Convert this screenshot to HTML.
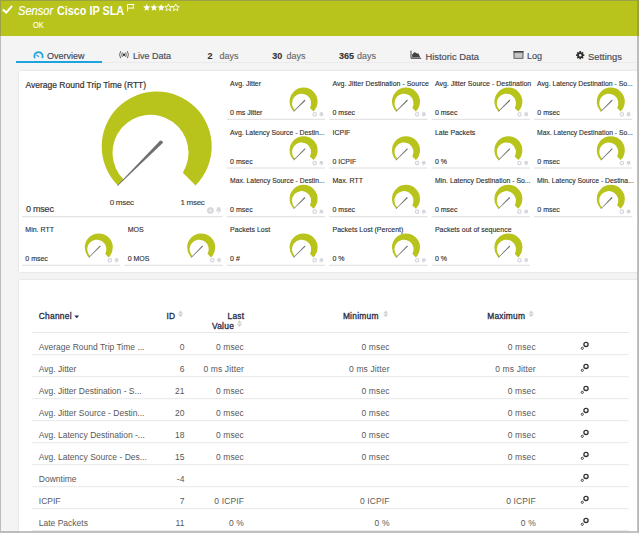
<!DOCTYPE html>
<html><head><meta charset="utf-8"><style>
*{margin:0;padding:0;box-sizing:border-box}
html,body{width:639px;height:533px;overflow:hidden;background:#f4f4f4;font-family:"Liberation Sans",sans-serif}
.abs{position:absolute}
#hdr{position:absolute;left:0;top:0;width:639px;height:35.5px;background:#b8c31c}
.w{position:absolute;color:#fff;white-space:nowrap}
.tab{position:absolute;top:51.2px;font-size:9px;color:#474a57;white-space:nowrap;line-height:11px;-webkit-text-stroke:0.15px #474a57}
.tab b{color:#333;-webkit-text-stroke:0.1px #333}
.panel{position:absolute;background:#fff;box-shadow:0 0 2px rgba(0,0,0,0.12)}
.ct{position:absolute;font-size:7px;line-height:8px;color:#2e2e2e;white-space:nowrap;-webkit-text-stroke:0.12px #2e2e2e}
.cv{position:absolute;font-size:7px;line-height:8px;color:#2e2e2e;white-space:nowrap;-webkit-text-stroke:0.12px #2e2e2e}
.tr{position:absolute;left:0;width:639px;height:22px;font-size:8.5px;color:#585858;letter-spacing:0.12px}
.tr span{position:absolute;top:9.5px;line-height:10px;white-space:nowrap}
.c1{left:38.8px;letter-spacing:0}
.c2{right:calc(639px - 184.6px)}
.c3{right:calc(639px - 244px)}
.c4{right:calc(639px - 389.6px)}
.c5{right:calc(639px - 535.8px)}
.th{position:absolute;font-size:8.4px;font-weight:normal;color:#262a45;white-space:nowrap;line-height:10px;-webkit-text-stroke:0.3px #262a45;letter-spacing:0.25px}
</style></head><body>
<div id="hdr"></div>
<svg class="abs" style="left:0;top:0" width="20" height="20"><path d="M2.8 9.4L6.3 12.6L12.1 5.9" fill="none" stroke="#fff" stroke-width="2"/></svg>
<div class="w" style="left:17.6px;top:4.8px;font-size:12.3px;font-style:italic;line-height:13px;-webkit-text-stroke:0.2px #fff;transform:scaleX(0.9);transform-origin:0 0">Sensor</div>
<div class="w" style="left:57.2px;top:4.8px;font-size:12.3px;font-weight:bold;line-height:13px;transform:scaleX(0.88);transform-origin:0 0">Cisco IP SLA</div>
<svg class="abs" style="left:126px;top:3px" width="10" height="9"><path d="M1.5 8.5V1.5H8L6.8 3.3L8 5.1H1.5" fill="none" stroke="#fff" stroke-width="1"/></svg>
<svg class="abs" style="left:143px;top:3px" width="40" height="10"><polygon points="3.70,0.95 4.69,3.33 7.27,3.54 5.30,5.22 5.90,7.73 3.70,6.39 1.50,7.73 2.10,5.22 0.13,3.54 2.71,3.33" fill="#fff"/><polygon points="10.95,0.95 11.94,3.33 14.52,3.54 12.55,5.22 13.15,7.73 10.95,6.39 8.75,7.73 9.35,5.22 7.38,3.54 9.96,3.33" fill="#fff"/><polygon points="18.20,0.95 19.19,3.33 21.77,3.54 19.80,5.22 20.40,7.73 18.20,6.39 16.00,7.73 16.60,5.22 14.63,3.54 17.21,3.33" fill="#fff"/><polygon points="25.45,0.95 26.44,3.33 29.02,3.54 27.05,5.22 27.65,7.73 25.45,6.39 23.25,7.73 23.85,5.22 21.88,3.54 24.46,3.33" fill="none" stroke="#fff" stroke-width="0.9"/><polygon points="32.70,0.95 33.69,3.33 36.27,3.54 34.30,5.22 34.90,7.73 32.70,6.39 30.50,7.73 31.10,5.22 29.13,3.54 31.71,3.33" fill="none" stroke="#fff" stroke-width="0.9"/></svg>
<div class="w" style="left:32.8px;top:19.6px;font-size:8.6px;line-height:10px;transform:scaleX(0.86);transform-origin:0 0;-webkit-text-stroke:0.15px #fff">OK</div>

<div class="abs" style="left:16px;top:62px;width:621px;height:1px;background:#eaeaea"></div>
<div class="abs" style="left:16px;top:61px;width:86px;height:2px;background:#1fa3de"></div>
<svg class="abs" style="left:33px;top:50px" width="12" height="10"><path d="M1.9 8.1A4.1 4.1 0 1 1 9.1 8.1" fill="none" stroke="#1fa3de" stroke-width="1.7"/><path d="M3.4 5.0L6.0 6.7" stroke="#1fa3de" stroke-width="1.1"/></svg>
<div class="tab" style="left:47px;color:#3b3f52">Overview</div>
<svg class="abs" style="left:118px;top:50px" width="12" height="10"><g fill="none" stroke="#555" stroke-width="0.9"><path d="M2.6 1.2Q0.6 4.7 2.6 8.2M4.4 2.4Q3.1 4.7 4.4 7M9.4 1.2Q11.4 4.7 9.4 8.2M7.6 2.4Q8.9 4.7 7.6 7"/></g><circle cx="6" cy="4.7" r="1.2" fill="#333"/></svg>
<div class="tab" style="left:133px">Live Data</div>
<div class="tab" style="left:207.5px"><b>2</b></div>
<div class="tab" style="left:219.4px;color:#666;-webkit-text-stroke:0.1px #666">days</div>
<div class="tab" style="left:272.3px"><b>30</b></div>
<div class="tab" style="left:286.6px;color:#666;-webkit-text-stroke:0.1px #666">days</div>
<div class="tab" style="left:339px"><b>365</b></div>
<div class="tab" style="left:357px;color:#666;-webkit-text-stroke:0.1px #666">days</div>
<svg class="abs" style="left:410px;top:50px" width="12" height="10"><path d="M1 0.7V8.3H11.2" fill="none" stroke="#444" stroke-width="1"/><path d="M2.1 7.6V4.6L4.7 1.9L6.4 3.3L8.4 3.4L10.4 7.6Z" fill="#444"/></svg>
<div class="tab" style="left:425.4px;font-size:9.4px">Historic Data</div>
<svg class="abs" style="left:513px;top:50px" width="11" height="10"><rect x="1" y="1.5" width="9" height="6.8" fill="#bbb" stroke="#555" stroke-width="0.9"/><rect x="0.6" y="1" width="9.8" height="1.6" fill="#444"/><path d="M2 4.3H9M2 5.7H9M2 7.1H9" stroke="#ddd" stroke-width="0.5"/></svg>
<div class="tab" style="left:527px">Log</div>
<svg class="abs" style="left:575px;top:50px" width="11" height="11"><g transform="translate(5.2 5.2)"><circle r="3.0" fill="#333"/><path d="M0-4.1V4.1M-4.1 0H4.1M-2.9-2.9L2.9 2.9M-2.9 2.9L2.9-2.9" stroke="#333" stroke-width="1.7"/><circle r="1.2" fill="#f4f4f4"/></g></svg>
<div class="tab" style="left:588px;font-size:9.4px">Settings</div>

<div class="panel" style="left:18.5px;top:70.7px;width:619px;height:201.3px"></div>
<div class="panel" style="left:18.7px;top:279.7px;width:619px;height:260px"></div>

<div class="abs" style="left:25.5px;top:79.6px;font-size:8.5px;line-height:10px;color:#333;white-space:nowrap;-webkit-text-stroke:0.2px #333">Average Round Trip Time (RTT)</div>
<div class="abs" style="left:25.9px;top:203.5px;font-size:9px;line-height:10px;color:#333;white-space:nowrap;letter-spacing:-0.2px;-webkit-text-stroke:0.15px #333">0 msec</div>
<div class="abs" style="left:109.8px;top:198px;font-size:8px;line-height:10px;color:#444;white-space:nowrap;letter-spacing:-0.3px;-webkit-text-stroke:0.15px #444">0 msec</div>
<div class="abs" style="left:180.5px;top:198px;font-size:8px;line-height:10px;color:#444;white-space:nowrap;letter-spacing:-0.3px;-webkit-text-stroke:0.15px #444">1 msec</div>
<div class="ct" style="left:230.10px;top:79.85px">Avg. Jitter</div><div class="cv" style="left:230.10px;top:108.95px">0 ms Jitter</div><div class="ct" style="left:332.50px;top:79.85px">Avg. Jitter Destination - Source</div><div class="cv" style="left:332.50px;top:108.95px">0 msec</div><div class="ct" style="left:434.90px;top:79.85px">Avg. Jitter Source - Destination</div><div class="cv" style="left:434.90px;top:108.95px">0 msec</div><div class="ct" style="left:537.30px;top:79.85px;transform:scaleX(0.978);transform-origin:0 0">Avg. Latency Destination - So...</div><div class="cv" style="left:537.30px;top:108.95px">0 msec</div><div class="ct" style="left:230.10px;top:128.50px;transform:scaleX(0.982);transform-origin:0 0">Avg. Latency Source - Destin...</div><div class="cv" style="left:230.10px;top:157.60px">0 msec</div><div class="ct" style="left:332.50px;top:128.50px">ICPIF</div><div class="cv" style="left:332.50px;top:157.60px">0 ICPIF</div><div class="ct" style="left:434.90px;top:128.50px">Late Packets</div><div class="cv" style="left:434.90px;top:157.60px">0 %</div><div class="ct" style="left:537.30px;top:128.50px;transform:scaleX(0.966);transform-origin:0 0">Max. Latency Destination - So...</div><div class="cv" style="left:537.30px;top:157.60px">0 msec</div><div class="ct" style="left:230.10px;top:177.15px;transform:scaleX(0.969);transform-origin:0 0">Max. Latency Source - Destin...</div><div class="cv" style="left:230.10px;top:206.25px">0 msec</div><div class="ct" style="left:332.50px;top:177.15px">Max. RTT</div><div class="cv" style="left:332.50px;top:206.25px">0 msec</div><div class="ct" style="left:434.90px;top:177.15px;transform:scaleX(0.982);transform-origin:0 0">Min. Latency Destination - So...</div><div class="cv" style="left:434.90px;top:206.25px">0 msec</div><div class="ct" style="left:537.30px;top:177.15px;transform:scaleX(0.972);transform-origin:0 0">Min. Latency Source - Destina...</div><div class="cv" style="left:537.30px;top:206.25px">0 msec</div><div class="ct" style="left:25.30px;top:225.80px">Min. RTT</div><div class="cv" style="left:25.30px;top:254.90px">0 msec</div><div class="ct" style="left:127.70px;top:225.80px">MOS</div><div class="cv" style="left:127.70px;top:254.90px">0 MOS</div><div class="ct" style="left:230.10px;top:225.80px">Packets Lost</div><div class="cv" style="left:230.10px;top:254.90px">0 #</div><div class="ct" style="left:332.50px;top:225.80px">Packets Lost (Percent)</div><div class="cv" style="left:332.50px;top:254.90px">0 %</div><div class="ct" style="left:434.90px;top:225.80px">Packets out of sequence</div><div class="cv" style="left:434.90px;top:254.90px">0 %</div>

<div class="th" style="left:38.8px;top:311px">Channel</div>
<svg class="abs" style="left:74px;top:315px" width="6" height="4"><path d="M0.3 0.5H5.2L2.75 3.3Z" fill="#2a2d45"/></svg>
<div class="th" style="left:166.4px;top:311px">ID</div>
<div class="th" style="left:227.5px;top:311px">Last</div>
<div class="th" style="left:212px;top:320.5px">Value</div>
<div class="th" style="left:342.9px;top:311px">Minimum</div>
<div class="th" style="left:487.2px;top:311px">Maximum</div>
<svg class="abs" style="left:0;top:0" width="639" height="533">
<rect x="226.80" y="118.75" width="98.3" height="1.2" fill="#e3e3e3"/><g transform="translate(303.6 101.55) scale(0.2545)"><path d="M-38.89 38.89A55.0 55.0 0 1 1 38.89 38.89L24.86 24.86A37.5 37.5 0 1 0 -33.91 33.91Z" fill="#b8c31c"/><path d="M-40.01 38.59L2.60 -6.00L6.00 -2.60L-38.59 40.01Z" fill="#707070"/><circle cx="4.3" cy="-4.3" r="2.4" fill="#707070"/></g><g transform="translate(312.4 112.05)"><circle cx="2.3" cy="2.3" r="1.7" fill="none" stroke="#d3d6dc" stroke-width="1.2"/><path d="M7.6 0.3H10.4L11.1 3.6H6.9Z M8.75 3.6H9.25V5.2H8.75Z" fill="#d3d6dc"/></g><rect x="329.20" y="118.75" width="98.3" height="1.2" fill="#e3e3e3"/><g transform="translate(406.0 101.55) scale(0.2545)"><path d="M-38.89 38.89A55.0 55.0 0 1 1 38.89 38.89L24.86 24.86A37.5 37.5 0 1 0 -33.91 33.91Z" fill="#b8c31c"/><path d="M-40.01 38.59L2.60 -6.00L6.00 -2.60L-38.59 40.01Z" fill="#707070"/><circle cx="4.3" cy="-4.3" r="2.4" fill="#707070"/></g><g transform="translate(414.80000000000007 112.05)"><circle cx="2.3" cy="2.3" r="1.7" fill="none" stroke="#d3d6dc" stroke-width="1.2"/><path d="M7.6 0.3H10.4L11.1 3.6H6.9Z M8.75 3.6H9.25V5.2H8.75Z" fill="#d3d6dc"/></g><rect x="431.60" y="118.75" width="98.3" height="1.2" fill="#e3e3e3"/><g transform="translate(508.4 101.55) scale(0.2545)"><path d="M-38.89 38.89A55.0 55.0 0 1 1 38.89 38.89L24.86 24.86A37.5 37.5 0 1 0 -33.91 33.91Z" fill="#b8c31c"/><path d="M-40.01 38.59L2.60 -6.00L6.00 -2.60L-38.59 40.01Z" fill="#707070"/><circle cx="4.3" cy="-4.3" r="2.4" fill="#707070"/></g><g transform="translate(517.2 112.05)"><circle cx="2.3" cy="2.3" r="1.7" fill="none" stroke="#d3d6dc" stroke-width="1.2"/><path d="M7.6 0.3H10.4L11.1 3.6H6.9Z M8.75 3.6H9.25V5.2H8.75Z" fill="#d3d6dc"/></g><rect x="534.00" y="118.75" width="98.3" height="1.2" fill="#e3e3e3"/><g transform="translate(610.8 101.55) scale(0.2545)"><path d="M-38.89 38.89A55.0 55.0 0 1 1 38.89 38.89L24.86 24.86A37.5 37.5 0 1 0 -33.91 33.91Z" fill="#b8c31c"/><path d="M-40.01 38.59L2.60 -6.00L6.00 -2.60L-38.59 40.01Z" fill="#707070"/><circle cx="4.3" cy="-4.3" r="2.4" fill="#707070"/></g><g transform="translate(619.6 112.05)"><circle cx="2.3" cy="2.3" r="1.7" fill="none" stroke="#d3d6dc" stroke-width="1.2"/><path d="M7.6 0.3H10.4L11.1 3.6H6.9Z M8.75 3.6H9.25V5.2H8.75Z" fill="#d3d6dc"/></g><rect x="226.80" y="167.40" width="98.3" height="1.2" fill="#e3e3e3"/><g transform="translate(303.6 150.2) scale(0.2545)"><path d="M-38.89 38.89A55.0 55.0 0 1 1 38.89 38.89L24.86 24.86A37.5 37.5 0 1 0 -33.91 33.91Z" fill="#b8c31c"/><path d="M-40.01 38.59L2.60 -6.00L6.00 -2.60L-38.59 40.01Z" fill="#707070"/><circle cx="4.3" cy="-4.3" r="2.4" fill="#707070"/></g><g transform="translate(312.4 160.70000000000002)"><circle cx="2.3" cy="2.3" r="1.7" fill="none" stroke="#d3d6dc" stroke-width="1.2"/><path d="M7.6 0.3H10.4L11.1 3.6H6.9Z M8.75 3.6H9.25V5.2H8.75Z" fill="#d3d6dc"/></g><rect x="329.20" y="167.40" width="98.3" height="1.2" fill="#e3e3e3"/><g transform="translate(406.0 150.2) scale(0.2545)"><path d="M-38.89 38.89A55.0 55.0 0 1 1 38.89 38.89L24.86 24.86A37.5 37.5 0 1 0 -33.91 33.91Z" fill="#b8c31c"/><path d="M-40.01 38.59L2.60 -6.00L6.00 -2.60L-38.59 40.01Z" fill="#707070"/><circle cx="4.3" cy="-4.3" r="2.4" fill="#707070"/></g><g transform="translate(414.80000000000007 160.70000000000002)"><circle cx="2.3" cy="2.3" r="1.7" fill="none" stroke="#d3d6dc" stroke-width="1.2"/><path d="M7.6 0.3H10.4L11.1 3.6H6.9Z M8.75 3.6H9.25V5.2H8.75Z" fill="#d3d6dc"/></g><rect x="431.60" y="167.40" width="98.3" height="1.2" fill="#e3e3e3"/><g transform="translate(508.4 150.2) scale(0.2545)"><path d="M-38.89 38.89A55.0 55.0 0 1 1 38.89 38.89L24.86 24.86A37.5 37.5 0 1 0 -33.91 33.91Z" fill="#b8c31c"/><path d="M-40.01 38.59L2.60 -6.00L6.00 -2.60L-38.59 40.01Z" fill="#707070"/><circle cx="4.3" cy="-4.3" r="2.4" fill="#707070"/></g><g transform="translate(517.2 160.70000000000002)"><circle cx="2.3" cy="2.3" r="1.7" fill="none" stroke="#d3d6dc" stroke-width="1.2"/><path d="M7.6 0.3H10.4L11.1 3.6H6.9Z M8.75 3.6H9.25V5.2H8.75Z" fill="#d3d6dc"/></g><rect x="534.00" y="167.40" width="98.3" height="1.2" fill="#e3e3e3"/><g transform="translate(610.8 150.2) scale(0.2545)"><path d="M-38.89 38.89A55.0 55.0 0 1 1 38.89 38.89L24.86 24.86A37.5 37.5 0 1 0 -33.91 33.91Z" fill="#b8c31c"/><path d="M-40.01 38.59L2.60 -6.00L6.00 -2.60L-38.59 40.01Z" fill="#707070"/><circle cx="4.3" cy="-4.3" r="2.4" fill="#707070"/></g><g transform="translate(619.6 160.70000000000002)"><circle cx="2.3" cy="2.3" r="1.7" fill="none" stroke="#d3d6dc" stroke-width="1.2"/><path d="M7.6 0.3H10.4L11.1 3.6H6.9Z M8.75 3.6H9.25V5.2H8.75Z" fill="#d3d6dc"/></g><rect x="226.80" y="216.05" width="98.3" height="1.2" fill="#e3e3e3"/><g transform="translate(303.6 198.85) scale(0.2545)"><path d="M-38.89 38.89A55.0 55.0 0 1 1 38.89 38.89L24.86 24.86A37.5 37.5 0 1 0 -33.91 33.91Z" fill="#b8c31c"/><path d="M-40.01 38.59L2.60 -6.00L6.00 -2.60L-38.59 40.01Z" fill="#707070"/><circle cx="4.3" cy="-4.3" r="2.4" fill="#707070"/></g><g transform="translate(312.4 209.35000000000002)"><circle cx="2.3" cy="2.3" r="1.7" fill="none" stroke="#d3d6dc" stroke-width="1.2"/><path d="M7.6 0.3H10.4L11.1 3.6H6.9Z M8.75 3.6H9.25V5.2H8.75Z" fill="#d3d6dc"/></g><rect x="329.20" y="216.05" width="98.3" height="1.2" fill="#e3e3e3"/><g transform="translate(406.0 198.85) scale(0.2545)"><path d="M-38.89 38.89A55.0 55.0 0 1 1 38.89 38.89L24.86 24.86A37.5 37.5 0 1 0 -33.91 33.91Z" fill="#b8c31c"/><path d="M-40.01 38.59L2.60 -6.00L6.00 -2.60L-38.59 40.01Z" fill="#707070"/><circle cx="4.3" cy="-4.3" r="2.4" fill="#707070"/></g><g transform="translate(414.80000000000007 209.35000000000002)"><circle cx="2.3" cy="2.3" r="1.7" fill="none" stroke="#d3d6dc" stroke-width="1.2"/><path d="M7.6 0.3H10.4L11.1 3.6H6.9Z M8.75 3.6H9.25V5.2H8.75Z" fill="#d3d6dc"/></g><rect x="431.60" y="216.05" width="98.3" height="1.2" fill="#e3e3e3"/><g transform="translate(508.4 198.85) scale(0.2545)"><path d="M-38.89 38.89A55.0 55.0 0 1 1 38.89 38.89L24.86 24.86A37.5 37.5 0 1 0 -33.91 33.91Z" fill="#b8c31c"/><path d="M-40.01 38.59L2.60 -6.00L6.00 -2.60L-38.59 40.01Z" fill="#707070"/><circle cx="4.3" cy="-4.3" r="2.4" fill="#707070"/></g><g transform="translate(517.2 209.35000000000002)"><circle cx="2.3" cy="2.3" r="1.7" fill="none" stroke="#d3d6dc" stroke-width="1.2"/><path d="M7.6 0.3H10.4L11.1 3.6H6.9Z M8.75 3.6H9.25V5.2H8.75Z" fill="#d3d6dc"/></g><rect x="534.00" y="216.05" width="98.3" height="1.2" fill="#e3e3e3"/><g transform="translate(610.8 198.85) scale(0.2545)"><path d="M-38.89 38.89A55.0 55.0 0 1 1 38.89 38.89L24.86 24.86A37.5 37.5 0 1 0 -33.91 33.91Z" fill="#b8c31c"/><path d="M-40.01 38.59L2.60 -6.00L6.00 -2.60L-38.59 40.01Z" fill="#707070"/><circle cx="4.3" cy="-4.3" r="2.4" fill="#707070"/></g><g transform="translate(619.6 209.35000000000002)"><circle cx="2.3" cy="2.3" r="1.7" fill="none" stroke="#d3d6dc" stroke-width="1.2"/><path d="M7.6 0.3H10.4L11.1 3.6H6.9Z M8.75 3.6H9.25V5.2H8.75Z" fill="#d3d6dc"/></g><rect x="22.00" y="264.70" width="98.3" height="1.2" fill="#e3e3e3"/><g transform="translate(98.8 247.5) scale(0.2545)"><path d="M-38.89 38.89A55.0 55.0 0 1 1 38.89 38.89L24.86 24.86A37.5 37.5 0 1 0 -33.91 33.91Z" fill="#b8c31c"/><path d="M-40.01 38.59L2.60 -6.00L6.00 -2.60L-38.59 40.01Z" fill="#707070"/><circle cx="4.3" cy="-4.3" r="2.4" fill="#707070"/></g><g transform="translate(107.6 258.0)"><circle cx="2.3" cy="2.3" r="1.7" fill="none" stroke="#d3d6dc" stroke-width="1.2"/><path d="M7.6 0.3H10.4L11.1 3.6H6.9Z M8.75 3.6H9.25V5.2H8.75Z" fill="#d3d6dc"/></g><rect x="124.40" y="264.70" width="98.3" height="1.2" fill="#e3e3e3"/><g transform="translate(201.2 247.5) scale(0.2545)"><path d="M-38.89 38.89A55.0 55.0 0 1 1 38.89 38.89L24.86 24.86A37.5 37.5 0 1 0 -33.91 33.91Z" fill="#b8c31c"/><path d="M-40.01 38.59L2.60 -6.00L6.00 -2.60L-38.59 40.01Z" fill="#707070"/><circle cx="4.3" cy="-4.3" r="2.4" fill="#707070"/></g><g transform="translate(210.0 258.0)"><circle cx="2.3" cy="2.3" r="1.7" fill="none" stroke="#d3d6dc" stroke-width="1.2"/><path d="M7.6 0.3H10.4L11.1 3.6H6.9Z M8.75 3.6H9.25V5.2H8.75Z" fill="#d3d6dc"/></g><rect x="226.80" y="264.70" width="98.3" height="1.2" fill="#e3e3e3"/><g transform="translate(303.6 247.5) scale(0.2545)"><path d="M-38.89 38.89A55.0 55.0 0 1 1 38.89 38.89L24.86 24.86A37.5 37.5 0 1 0 -33.91 33.91Z" fill="#b8c31c"/><path d="M-40.01 38.59L2.60 -6.00L6.00 -2.60L-38.59 40.01Z" fill="#707070"/><circle cx="4.3" cy="-4.3" r="2.4" fill="#707070"/></g><g transform="translate(312.4 258.0)"><circle cx="2.3" cy="2.3" r="1.7" fill="none" stroke="#d3d6dc" stroke-width="1.2"/><path d="M7.6 0.3H10.4L11.1 3.6H6.9Z M8.75 3.6H9.25V5.2H8.75Z" fill="#d3d6dc"/></g><rect x="329.20" y="264.70" width="98.3" height="1.2" fill="#e3e3e3"/><g transform="translate(406.0 247.5) scale(0.2545)"><path d="M-38.89 38.89A55.0 55.0 0 1 1 38.89 38.89L24.86 24.86A37.5 37.5 0 1 0 -33.91 33.91Z" fill="#b8c31c"/><path d="M-40.01 38.59L2.60 -6.00L6.00 -2.60L-38.59 40.01Z" fill="#707070"/><circle cx="4.3" cy="-4.3" r="2.4" fill="#707070"/></g><g transform="translate(414.80000000000007 258.0)"><circle cx="2.3" cy="2.3" r="1.7" fill="none" stroke="#d3d6dc" stroke-width="1.2"/><path d="M7.6 0.3H10.4L11.1 3.6H6.9Z M8.75 3.6H9.25V5.2H8.75Z" fill="#d3d6dc"/></g><rect x="431.60" y="264.70" width="98.3" height="1.2" fill="#e3e3e3"/><g transform="translate(508.4 247.5) scale(0.2545)"><path d="M-38.89 38.89A55.0 55.0 0 1 1 38.89 38.89L24.86 24.86A37.5 37.5 0 1 0 -33.91 33.91Z" fill="#b8c31c"/><path d="M-40.01 38.59L2.60 -6.00L6.00 -2.60L-38.59 40.01Z" fill="#707070"/><circle cx="4.3" cy="-4.3" r="2.4" fill="#707070"/></g><g transform="translate(517.2 258.0)"><circle cx="2.3" cy="2.3" r="1.7" fill="none" stroke="#d3d6dc" stroke-width="1.2"/><path d="M7.6 0.3H10.4L11.1 3.6H6.9Z M8.75 3.6H9.25V5.2H8.75Z" fill="#d3d6dc"/></g><rect x="22.00" y="216.05" width="200.6" height="1.2" fill="#e3e3e3"/><g transform="translate(156.7 146.5) scale(1)"><path d="M-38.89 38.89A55.0 55.0 0 1 1 38.89 38.89L26.16 26.16A38.0 38.0 0 1 0 -33.09 33.09Z" fill="#b8c31c"/><path d="M-39.51 39.09L3.06 -5.54L5.54 -3.06L-39.09 39.51Z" fill="#707070"/><circle cx="4.3" cy="-4.3" r="1.75" fill="#707070"/></g><g transform="translate(210.4 210.5)"><circle r="2.5" fill="none" stroke="#d6d8dc" stroke-width="1.6"/><path d="M0 -3.4V3.4M-3.4 0H3.4M-2.4 -2.4L2.4 2.4M-2.4 2.4L2.4 -2.4" stroke="#d6d8dc" stroke-width="1.2"/><circle r="0.9" fill="#fff"/></g><path d="M217.2 207.2H220.2L221.2 211.5H216.2Z M218.4 211.5H219V214H218.4Z" fill="#d6d8dc"/><rect x="32.2" y="354.20" width="596.5" height="1" fill="#e8e8e8"/><rect x="32.2" y="376.20" width="596.5" height="1" fill="#e8e8e8"/><rect x="32.2" y="398.20" width="596.5" height="1" fill="#e8e8e8"/><rect x="32.2" y="420.20" width="596.5" height="1" fill="#e8e8e8"/><rect x="32.2" y="442.20" width="596.5" height="1" fill="#e8e8e8"/><rect x="32.2" y="464.20" width="596.5" height="1" fill="#e8e8e8"/><rect x="32.2" y="486.20" width="596.5" height="1" fill="#e8e8e8"/><rect x="32.2" y="508.20" width="596.5" height="1" fill="#e8e8e8"/><rect x="32.2" y="530.20" width="596.5" height="1" fill="#e8e8e8"/><path d="M178 313.5L180.5 310.5L183 313.5Z M178 314.3L180.5 317.3L183 314.3Z" fill="#d0d0d0"/><path d="M237 323.3L239.5 320.3L242 323.3Z M237 324.1L239.5 327.1L242 324.1Z" fill="#d0d0d0"/><path d="M383.2 313.5L385.7 310.5L388.2 313.5Z M383.2 314.3L385.7 317.3L388.2 314.3Z" fill="#d0d0d0"/><path d="M528.7 313.5L531.2 310.5L533.7 313.5Z M528.7 314.3L531.2 317.3L533.7 314.3Z" fill="#d0d0d0"/><rect x="32.2" y="332" width="596.5" height="1" fill="#e8e8e8"/><circle cx="586" cy="344.40" r="2.1" fill="none" stroke="#333" stroke-width="1.3"/><circle cx="582.3" cy="348.30" r="1.1" fill="none" stroke="#444" stroke-width="1"/><circle cx="586" cy="366.40" r="2.1" fill="none" stroke="#333" stroke-width="1.3"/><circle cx="582.3" cy="370.30" r="1.1" fill="none" stroke="#444" stroke-width="1"/><circle cx="586" cy="388.40" r="2.1" fill="none" stroke="#333" stroke-width="1.3"/><circle cx="582.3" cy="392.30" r="1.1" fill="none" stroke="#444" stroke-width="1"/><circle cx="586" cy="410.40" r="2.1" fill="none" stroke="#333" stroke-width="1.3"/><circle cx="582.3" cy="414.30" r="1.1" fill="none" stroke="#444" stroke-width="1"/><circle cx="586" cy="432.40" r="2.1" fill="none" stroke="#333" stroke-width="1.3"/><circle cx="582.3" cy="436.30" r="1.1" fill="none" stroke="#444" stroke-width="1"/><circle cx="586" cy="454.40" r="2.1" fill="none" stroke="#333" stroke-width="1.3"/><circle cx="582.3" cy="458.30" r="1.1" fill="none" stroke="#444" stroke-width="1"/><circle cx="586" cy="476.40" r="2.1" fill="none" stroke="#333" stroke-width="1.3"/><circle cx="582.3" cy="480.30" r="1.1" fill="none" stroke="#444" stroke-width="1"/><circle cx="586" cy="498.40" r="2.1" fill="none" stroke="#333" stroke-width="1.3"/><circle cx="582.3" cy="502.30" r="1.1" fill="none" stroke="#444" stroke-width="1"/><circle cx="586" cy="520.40" r="2.1" fill="none" stroke="#333" stroke-width="1.3"/><circle cx="582.3" cy="524.30" r="1.1" fill="none" stroke="#444" stroke-width="1"/>
</svg>
<div class="tr" style="top:332.70px"><span class="c1">Average Round Trip Time ...</span><span class="c2">0</span><span class="c3">0 msec</span><span class="c4">0 msec</span><span class="c5">0 msec</span></div><div class="tr" style="top:354.70px"><span class="c1">Avg. Jitter</span><span class="c2">6</span><span class="c3">0 ms Jitter</span><span class="c4">0 ms Jitter</span><span class="c5">0 ms Jitter</span></div><div class="tr" style="top:376.70px"><span class="c1">Avg. Jitter Destination - S...</span><span class="c2">21</span><span class="c3">0 msec</span><span class="c4">0 msec</span><span class="c5">0 msec</span></div><div class="tr" style="top:398.70px"><span class="c1">Avg. Jitter Source - Destin...</span><span class="c2">20</span><span class="c3">0 msec</span><span class="c4">0 msec</span><span class="c5">0 msec</span></div><div class="tr" style="top:420.70px"><span class="c1">Avg. Latency Destination -...</span><span class="c2">18</span><span class="c3">0 msec</span><span class="c4">0 msec</span><span class="c5">0 msec</span></div><div class="tr" style="top:442.70px"><span class="c1">Avg. Latency Source - Des...</span><span class="c2">15</span><span class="c3">0 msec</span><span class="c4">0 msec</span><span class="c5">0 msec</span></div><div class="tr" style="top:464.70px"><span class="c1">Downtime</span><span class="c2">-4</span><span class="c3"></span><span class="c4"></span><span class="c5"></span></div><div class="tr" style="top:486.70px"><span class="c1">ICPIF</span><span class="c2">7</span><span class="c3">0 ICPIF</span><span class="c4">0 ICPIF</span><span class="c5">0 ICPIF</span></div><div class="tr" style="top:508.70px"><span class="c1">Late Packets</span><span class="c2">11</span><span class="c3">0 %</span><span class="c4">0 %</span><span class="c5">0 %</span></div>
<div class="abs" style="left:0;top:1px;width:1px;height:530px;background:rgba(119,119,119,0.45)"></div>
<div class="abs" style="left:637px;top:1px;width:2px;height:530px;background:rgba(119,119,119,0.45)"></div>
<div class="abs" style="left:0;top:531px;width:639px;height:2px;background:rgba(119,119,119,0.45)"></div>
<div class="abs" style="left:0;top:0;width:639px;height:1px;background:rgba(119,119,119,0.45)"></div>
</body></html>
